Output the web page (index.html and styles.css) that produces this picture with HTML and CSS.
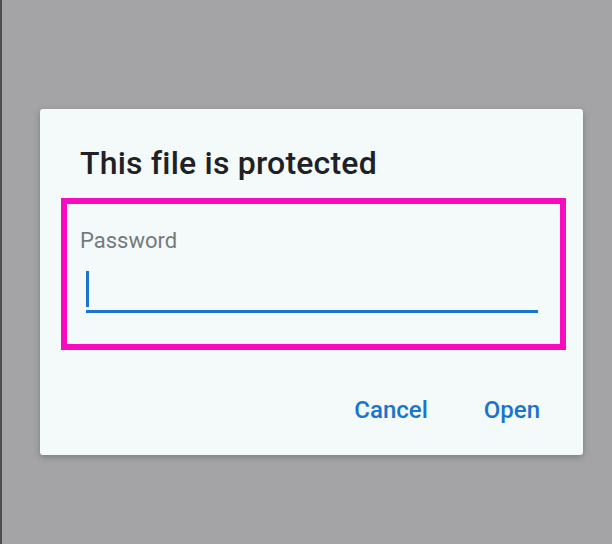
FILE: index.html
```html
<!DOCTYPE html>
<html lang="en">
<head>
    <meta charset="UTF-8">
    <meta name="viewport" content="width=device-width, initial-scale=1.0">
    <title>This file is protected</title>
    <link rel="stylesheet" href="styles.css">
</head>
<body>

    <div class="dialog">
        <h1 class="dialog-title">This file is protected</h1>

        <div class="highlight">
            <label class="field-label" for="password">Password</label>
            <div class="field">
                <span class="caret"></span>
            </div>
        </div>

        <div class="actions">
            <button class="action">Cancel</button>
            <button class="action">Open</button>
        </div>
    </div>

</body>
</html>
```

FILE: styles.css
```css
* {
    margin: 0;
    padding: 0;
    box-sizing: border-box;
}

body {
    font-family: Roboto, 'Noto Sans', sans-serif;
    background-color: #a4a4a6;
    border-left: 2px solid #4d4d4f;
    min-height: 544px;
    padding-top: 109px;
    padding-left: 38px;
}

.dialog {
    width: 543px;
    height: 346px;
    background: #f4f9fa;
    border-radius: 3px;
    box-shadow: 0px 2px 6px rgba(0, 0, 0, 0.25);
    padding-top: 35px;
}

.dialog-title {
    font-size: 32px;
    line-height: 38px;
    font-weight: 500;
    letter-spacing: 0.2px;
    color: #202124;
    padding-left: 40px;
}

.highlight {
    margin: 16px 17px 0 21px;
    height: 152px;
    border: 6px solid #f90ac0;
    padding-top: 24px;
}

.field-label {
    display: block;
    font-size: 22px;
    line-height: 26px;
    color: #76797c;
    padding-left: 13px;
}

.field {
    margin: 11px 22px 0 19px;
    height: 48px;
    border-bottom: 3px solid #1a74cc;
    padding-top: 6px;
}

.caret {
    display: block;
    width: 3px;
    height: 36px;
    background: #1a74cc;
}

.actions {
    display: flex;
    justify-content: flex-end;
    gap: 56px;
    padding: 46px 43px 0 0;
}

.action {
    background: none;
    border: none;
    font-family: inherit;
    font-size: 24px;
    line-height: 28px;
    font-weight: 500;
    color: #1a74cc;
    cursor: pointer;
}
```
